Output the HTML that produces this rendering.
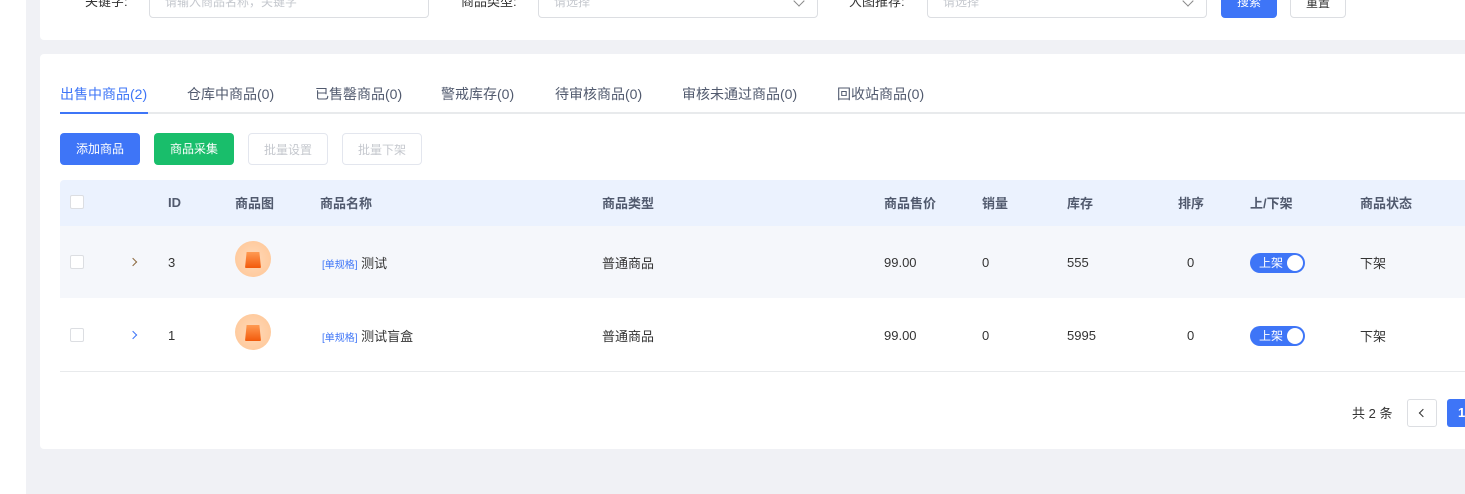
<!DOCTYPE html><html><head><meta charset="utf-8"><style>
*{box-sizing:border-box;margin:0;padding:0}
body{width:1465px;height:494px;overflow:hidden;background:#f0f1f5;font-family:"Liberation Sans","Noto Sans CJK SC",sans-serif;font-size:13px;color:#333;position:relative}
.a{position:absolute}
.side{left:0;top:0;width:26px;height:494px;background:#fff}
.card{background:#fff;border-radius:4px}
.inp{border:1px solid #dcdee2;border-radius:4px;height:34px;top:-16px;background:#fff;color:#c5c8ce;padding:8px 15px 0;font-size:12px}
.lbl{font-size:13px;color:#333;top:-9px}
.chev{position:absolute;right:14px;top:12px;width:8px;height:8px;border-right:1px solid #888;border-bottom:1px solid #888;transform:rotate(45deg)}
.btn{height:32px;border-radius:4px;text-align:center;line-height:32px;font-size:12px}
.tab{top:84px;font-size:14px;color:#515a6e}
.cb{width:14px;height:14px;border:1px solid #dcdee2;border-radius:2px;background:#fff}
.th{top:193px;font-size:13px;color:#515a6e;font-weight:bold}
.r1{top:253px}.r2{top:326px}
.n{margin-top:2px}
.tg{width:55px;height:20px;border-radius:10px;background:#3e75f7;color:#fff;font-size:12px;line-height:20px;padding-left:9px}
.tg:after{content:"";position:absolute;right:2px;top:2px;width:16px;height:16px;border-radius:50%;background:#fff}
.ic{width:36px;height:36px;border-radius:50%;background:radial-gradient(circle,#ffd9b8,#ffc594)}
.ic:after{content:"";position:absolute;left:10px;top:11px;width:16px;height:16px;background:linear-gradient(#ff9a52,#f25a0c);clip-path:polygon(10% 0,90% 0,100% 100%,0 100%);border-radius:1px}
.sp{font-size:10px;color:#3e75f7}
.ex{width:6px;height:6px;border-right:1px solid #8c6a3f;border-top:1px solid #8c6a3f;transform:rotate(45deg)}
</style></head><body>
<div class="a side"></div>
<div class="a card" style="left:40px;top:-10px;width:1440px;height:50px"></div>
<div class="a lbl" style="left:85px">关键字:</div>
<div class="a inp" style="left:149px;width:280px">请输入商品名称，关键字</div>
<div class="a lbl" style="left:461px">商品类型:</div>
<div class="a inp" style="left:538px;width:280px">请选择<span class="chev"></span></div>
<div class="a lbl" style="left:849px">大图推荐:</div>
<div class="a inp" style="left:927px;width:280px">请选择<span class="chev"></span></div>
<div class="a btn" style="left:1221px;top:-14px;width:56px;background:#3e75f7;color:#fff">搜索</div>
<div class="a btn" style="left:1290px;top:-14px;width:56px;border:1px solid #dcdee2;background:#fff">重置</div>

<div class="a card" style="left:40px;top:54px;width:1440px;height:395px"></div>
<div class="a" style="left:60px;top:112px;width:1405px;height:2px;background:#e8eaec"></div>
<div class="a" style="left:60px;top:112px;width:88px;height:2px;background:#3e75f7"></div>
<div class="a tab" style="left:60px;color:#3e75f7">出售中商品(2)</div>
<div class="a tab" style="left:187px">仓库中商品(0)</div>
<div class="a tab" style="left:315px">已售罄商品(0)</div>
<div class="a tab" style="left:441px">警戒库存(0)</div>
<div class="a tab" style="left:555px">待审核商品(0)</div>
<div class="a tab" style="left:682px">审核未通过商品(0)</div>
<div class="a tab" style="left:837px">回收站商品(0)</div>

<div class="a btn" style="left:60px;top:133px;width:80px;background:#3e75f7;color:#fff">添加商品</div>
<div class="a btn" style="left:154px;top:133px;width:80px;background:#19be6b;color:#fff">商品采集</div>
<div class="a btn" style="left:248px;top:133px;width:80px;border:1px solid #e3e6ee;color:#c5c8ce">批量设置</div>
<div class="a btn" style="left:342px;top:133px;width:80px;border:1px solid #e3e6ee;color:#c5c8ce">批量下架</div>

<div class="a" style="left:60px;top:180px;width:1405px;height:46px;background:#ebf2fe;border-radius:4px 0 0 0"></div>
<div class="a" style="left:60px;top:226px;width:1405px;height:72px;background:#f5f7fb"></div>
<div class="a" style="left:60px;top:371px;width:1405px;height:1px;background:#e8eaec"></div>
<div class="a cb" style="left:70px;top:195px"></div>
<div class="a th n" style="left:168px">ID</div>
<div class="a th" style="left:235px">商品图</div>
<div class="a th" style="left:320px">商品名称</div>
<div class="a th" style="left:602px">商品类型</div>
<div class="a th" style="left:884px">商品售价</div>
<div class="a th" style="left:982px">销量</div>
<div class="a th" style="left:1067px">库存</div>
<div class="a th" style="left:1178px">排序</div>
<div class="a th" style="left:1250px">上/下架</div>
<div class="a th" style="left:1360px">商品状态</div>

<div class="a cb" style="left:70px;top:255px"></div>
<div class="a ex" style="left:130px;top:259px"></div>
<div class="a r1 n" style="left:168px">3</div>
<div class="a ic" style="left:235px;top:241px"></div>
<div class="a r1" style="left:322px"><span class="sp">[单规格]</span> 测试</div>
<div class="a r1" style="left:602px">普通商品</div>
<div class="a r1 n" style="left:884px">99.00</div>
<div class="a r1 n" style="left:982px">0</div>
<div class="a r1 n" style="left:1067px">555</div>
<div class="a r1 n" style="left:1187px">0</div>
<div class="a tg" style="left:1250px;top:253px">上架</div>
<div class="a r1" style="left:1360px">下架</div>

<div class="a cb" style="left:70px;top:328px"></div>
<div class="a ex" style="left:130px;top:332px;border-color:#3e75f7"></div>
<div class="a r2 n" style="left:168px">1</div>
<div class="a ic" style="left:235px;top:314px"></div>
<div class="a r2" style="left:322px"><span class="sp">[单规格]</span> 测试盲盒</div>
<div class="a r2" style="left:602px">普通商品</div>
<div class="a r2 n" style="left:884px">99.00</div>
<div class="a r2 n" style="left:982px">0</div>
<div class="a r2 n" style="left:1067px">5995</div>
<div class="a r2 n" style="left:1187px">0</div>
<div class="a tg" style="left:1250px;top:326px">上架</div>
<div class="a r2" style="left:1360px">下架</div>

<div class="a" style="left:1352px;top:403px;font-size:13px">共 2 条</div>
<div class="a" style="left:1407px;top:399px;width:30px;height:28px;border:1px solid #dcdee2;border-radius:3px;background:#fff"><span class="a" style="left:12px;top:10px;width:6px;height:6px;border-left:1.5px solid #333;border-bottom:1.5px solid #333;transform:rotate(45deg)"></span></div>
<div class="a" style="left:1447px;top:399px;width:30px;height:28px;border-radius:3px;background:#3e75f7;color:#fff;font-weight:bold;line-height:28px;padding-left:11px;font-size:13px">1</div>
</body></html>
